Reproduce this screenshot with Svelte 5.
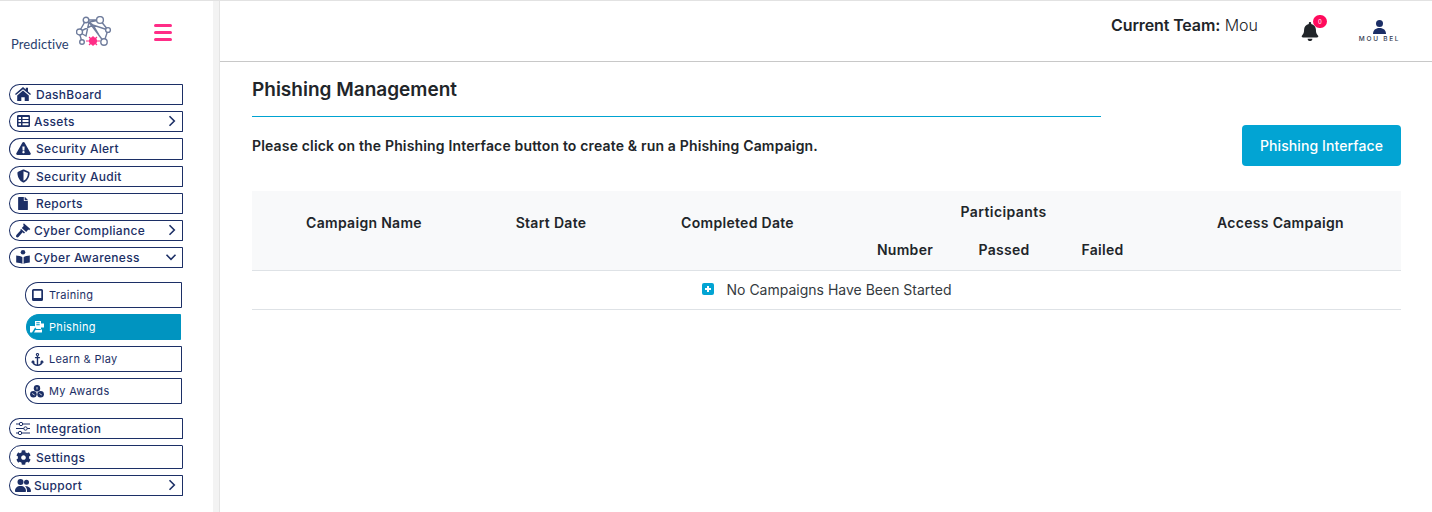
<script>
  const top = [
    { label: 'DashBoard', icon: 'home' },
    { label: 'Assets', icon: 'table', arrow: 'right' },
    { label: 'Security Alert', icon: 'alert', wide: true },
    { label: 'Security Audit', icon: 'shield' },
    { label: 'Reports', icon: 'file' },
    { label: 'Cyber Compliance', icon: 'gavel', arrow: 'right' },
    { label: 'Cyber Awareness', icon: 'book', arrow: 'down' }
  ];
  const sub = [
    { label: 'Training', icon: 'tablet' },
    { label: 'Phishing', icon: 'mail', active: true },
    { label: 'Learn & Play', icon: 'anchor' },
    { label: 'My Awards', icon: 'cubes' }
  ];
  const bottom = [
    { label: 'Integration', icon: 'sliders' },
    { label: 'Settings', icon: 'cog', tall: true },
    { label: 'Support', icon: 'users', arrow: 'right' }
  ];
</script>

{#snippet icon(name)}
  {#if name === 'home'}
    <svg class="ic" width="16" height="14" viewBox="0 0 16 14"><path d="M8 0L0 7l.9 1.100L8 2.200l7.100 5.900L16 7l-3-2.600V.7h-2.200v1.800zM2.200 8.500L8 3.500l5.800 5V14H9.700v-3.800H6.300V14H2.200z"/></svg>
  {:else if name === 'table'}
    <svg class="ic" width="13" height="12" viewBox="0 0 13 12"><path fill-rule="evenodd" d="M1.200 0h10.600A1.200 1.200 0 0 1 13 1.200v9.600a1.200 1.200 0 0 1-1.200 1.200H1.200A1.200 1.200 0 0 1 0 10.800V1.200A1.200 1.200 0 0 1 1.200 0zM1.500 2v2h2.500V2zm4 0v2h6V2zm-4 3.100v2h2.500v-2zm4 0v2h6v-2zm-4 3.100v2h2.500v-2zm4 0v2h6v-2z"/></svg>
  {:else if name === 'alert'}
    <svg class="ic" width="15" height="13" viewBox="0 0 576 512"><path d="M569.517 440.013C587.975 472.007 564.806 512 527.940 512H48.054c-36.937 0-59.999-40.055-41.577-71.987L246.423 23.985c18.467-32.009 64.720-31.951 83.154 0l239.940 416.028zM288 354c-25.405 0-46 20.595-46 46s20.595 46 46 46 46-20.595 46-46-20.595-46-46-46zm-43.673-165.346l7.418 136c.347 6.364 5.609 11.346 11.982 11.346h48.546c6.373 0 11.635-4.982 11.982-11.346l7.418-136c.375-6.874-5.098-12.654-11.982-12.654h-63.383c-6.884 0-12.356 5.780-11.981 12.654z"/></svg>
  {:else if name === 'shield'}
    <svg class="ic" width="13" height="14" viewBox="0 0 512 512"><path d="M466.500 83.700l-192-80a48.150 48.150 0 0 0-36.900 0l-192 80C27.700 91.100 16 108.600 16 128c0 198.500 114.500 335.700 221.500 380.300 11.800 4.900 25.100 4.900 36.900 0C360.100 472.600 496 349.300 496 128c0-19.400-11.700-36.900-29.500-44.300zM256.100 446.300l-.1-381 175.900 73.300c-3.300 151.400-82.100 261.100-175.800 307.700z"/></svg>
  {:else if name === 'file'}
    <svg class="ic" width="10" height="13" viewBox="0 0 384 512"><path d="M224 136V0H24C10.700 0 0 10.700 0 24v464c0 13.300 10.700 24 24 24h336c13.300 0 24-10.700 24-24V160H248c-13.200 0-24-10.800-24-24zm160-14.100v6.100H256V0h6.100c6.400 0 12.500 2.500 17 7l97.900 98c4.500 4.500 7 10.600 7 16.900z"/></svg>
  {:else if name === 'gavel'}
    <svg class="ic" width="15" height="15" viewBox="0 0 15 15"><path d="M7.800.2l6.500 5.800-1.200 1.300-.8-.7-2.100 2.300-4.400-3.900 2.100-2.300-.8-.7zM5.200 6l3.800 3.400-1 1.100-1.400-1.200-3.900 4.500c-.7.800-1.700.9-2.300.3s-.5-1.500.2-2.300l4.100-4.600-.5-.4z"/></svg>
  {:else if name === 'book'}
    <svg class="ic" width="14" height="14" viewBox="0 0 14 14"><circle cx="7" cy="2.300" r="2.300"/><path d="M.2 5.400C2.300 5.500 5.200 5.900 6.400 7.200V14C5 13 2.300 12.600.2 12.500zM13.800 5.400v7.100c-2.100.1-4.800.5-6.200 1.500V7.200c1.200-1.300 4.100-1.700 6.200-1.800z"/></svg>
  {:else if name === 'tablet'}
    <svg class="ic" width="11" height="12" viewBox="0 0 11 12"><path fill-rule="evenodd" d="M1.500 0h8A1.500 1.500 0 0 1 11 1.500v9A1.500 1.500 0 0 1 9.500 12h-8A1.500 1.500 0 0 1 0 10.500v-9A1.500 1.500 0 0 1 1.500 0zm.2 1.700v7.200h7.600V1.700z"/></svg>
  {:else if name === 'mail'}
    <svg class="ic" width="14" height="12" viewBox="0 0 14 12"><path fill-rule="evenodd" d="M5 0h6v2.500h3v4h-3V8H6.500L5 6.500zM6.300 1.300v1h3.400v-1zm0 2v1h3.400v-1zM0 5h4.500l1 1-1 1.500L3 10l-1 1.500H.5A.5.500 0 0 1 0 11zm10.500 3.500H12V11a.6.600 0 0 1-.6.600H4l1.500-2.500h5z"/></svg>
  {:else if name === 'anchor'}
    <svg class="ic" width="13" height="13" viewBox="0 0 576 576"><path d="M288 0a72 72 0 0 1 30 137.500V176h66a18 18 0 0 1 18 18v24a18 18 0 0 1-18 18h-66v270c60-8 108-40 128-88l-34-2c-10 0-15-12-8-20l72-72c5-5 13-5 18 0l72 72c7 8 2 20-8 20l-30 2C500 510 400 576 288 576S76 510 46 418l-30-2c-10 0-15-12-8-20l72-72c5-5 13-5 18 0l72 72c7 8 2 20-8 20l-34 2c20 48 68 80 128 88V236h-66a18 18 0 0 1-18-18v-24a18 18 0 0 1 18-18h66v-38.500A72 72 0 0 1 288 0zm0 48a24 24 0 1 0 0 48 24 24 0 0 0 0-48z"/></svg>
  {:else if name === 'cubes'}
    <svg class="ic" width="14" height="13" viewBox="0 0 14 13"><circle cx="7" cy="3.300" r="3.200"/><circle cx="3.400" cy="9.300" r="3.300"/><circle cx="10.600" cy="9.300" r="3.300"/><path d="M7 2v2.500M2.200 8.500l2.400 1.500M9.400 8.500l2.400 1.500" stroke="#fff" stroke-width=".8" fill="none"/></svg>
  {:else if name === 'sliders'}
    <svg class="ic" width="14" height="13" viewBox="0 0 14 13"><path d="M0 2h14M0 6.500h14M0 11h14" stroke="currentColor" stroke-width="1" fill="none"/><circle cx="5" cy="2" r="1.700" fill="#fff" stroke="currentColor"/><circle cx="9.500" cy="6.500" r="1.700" fill="#fff" stroke="currentColor"/><circle cx="4" cy="11" r="1.700" fill="#fff" stroke="currentColor"/></svg>
  {:else if name === 'cog'}
    <svg class="ic" width="15" height="15" viewBox="0 0 512 512"><path d="M487.400 315.700l-42.600-24.600c4.300-23.200 4.300-47 0-70.200l42.600-24.600c4.900-2.800 7.100-8.600 5.500-14-11.100-35.600-30-67.800-54.700-94.600-3.800-4.100-10-5.100-14.800-2.300L380.800 110c-17.900-15.400-38.500-27.300-60.800-35.100V25.800c0-5.600-3.900-10.500-9.400-11.700-36.700-8.200-74.300-7.800-109.200 0-5.500 1.200-9.400 6.100-9.400 11.700V75c-22.200 7.900-42.800 19.800-60.800 35.100L88.700 85.500c-4.900-2.800-11-1.900-14.800 2.300-24.700 26.700-43.600 58.900-54.700 94.600-1.700 5.400.6 11.200 5.500 14L67.300 221c-4.300 23.200-4.300 47 0 70.200l-42.600 24.600c-4.900 2.800-7.100 8.600-5.500 14 11.100 35.600 30 67.800 54.700 94.600 3.800 4.100 10 5.100 14.800 2.300l42.600-24.600c17.900 15.400 38.500 27.300 60.800 35.100v49.200c0 5.600 3.900 10.500 9.400 11.700 36.700 8.200 74.300 7.800 109.200 0 5.500-1.200 9.400-6.100 9.400-11.700v-49.200c22.200-7.900 42.800-19.800 60.800-35.100l42.600 24.600c4.900 2.800 11 1.900 14.800-2.300 24.700-26.700 43.600-58.900 54.700-94.600 1.500-5.500-.7-11.300-5.600-14.100zM256 336c-44.100 0-80-35.900-80-80s35.900-80 80-80 80 35.900 80 80-35.900 80-80 80z"/></svg>
  {:else if name === 'users'}
    <svg class="ic" width="16" height="13" viewBox="0 0 16 13"><circle cx="5.500" cy="3" r="3"/><circle cx="11.500" cy="3.300" r="2.500"/><path d="M0 12.200C0 9 2 7 5.500 7S11 9 11 12.200c0 .5-.3.800-.8.800H.8c-.5 0-.8-.3-.8-.8zM12 13h3.300c.4 0 .7-.3.700-.7C16 9.500 14.300 7.200 11 7.200c-.4 0-.8 0-1 .1 1.500 1.200 2.200 3 2 5.700z"/></svg>
  {/if}
{/snippet}

{#snippet chevron(dir)}
  <svg class="chev" class:down={dir === 'down'} width="12" height="12" viewBox="0 0 12 12">
    {#if dir === 'right'}
      <path d="M3.500 1.200L8.300 6l-4.800 4.800" />
    {:else}
      <path d="M1.500 3.800L6 8.300l4.500-4.500" />
    {/if}
  </svg>
{/snippet}

{#snippet item(it)}
  <div class="item" class:has-arrow={it.arrow} class:tall={it.tall} class:wide={it.wide}>
    <span class="icon-box">{@render icon(it.icon)}</span>
    <span class="label">{it.label}</span>
    {#if it.arrow}{@render chevron(it.arrow)}{/if}
  </div>
{/snippet}

<div class="page">
  <aside class="sidebar">
    <div class="brand">
      <div class="logo-text">
        <span class="wordmark">Predictive</span>
        <svg class="network" width="36" height="34" viewBox="0 0 36 34">
          <g fill="#fff" stroke="#6f7c9c" stroke-width="1.400">
            <path d="M3 16L10 4l14 0 8 10-4 12M3 16l7 4 3-14 11-2M3 16l14-7 15 5M10 4l7 5 6 10M13 6l15 20M6 26l-3-10" fill="none"/>
            <circle cx="10" cy="4" r="2.800"/>
            <circle cx="24" cy="4" r="3.400"/>
            <circle cx="3.500" cy="16" r="3"/>
            <circle cx="32" cy="14" r="2.400"/>
            <circle cx="6" cy="26" r="2.300"/>
            <circle cx="28" cy="26" r="3.200"/>
          </g>
          <g fill="#ff2d87" stroke="#ff2d87">
            <circle cx="17" cy="25" r="3.600"/>
            <path d="M10 25h14M17 20v10M13 21l8 8M21 21l-8 8" stroke-width="1.100" fill="none"/>
          </g>
        </svg>
      </div>
      <div class="burger"><i></i><i></i><i></i></div>
    </div>

    <nav class="nav">
      {#each top as it}{@render item(it)}{/each}
      <div class="subnav">
        {#each sub as it}
          <div class="subitem" class:active={it.active}>
            <span class="icon-box">{@render icon(it.icon)}</span>
            <span>{it.label}</span>
          </div>
        {/each}
      </div>
      {#each bottom as it}{@render item(it)}{/each}
    </nav>
  </aside>

  <div class="gutter"></div>

  <main class="main">
    <header class="topbar">
      <div class="team"><b>Current Team:</b> <span>Mou</span></div>
      <div class="bell">
        <svg width="18" height="19" viewBox="0 0 448 512"><path d="M224 512c35.320 0 63.970-28.650 63.970-64H160.030c0 35.350 28.650 64 63.970 64zm215.390-149.710c-19.320-20.760-55.470-51.990-55.470-154.290 0-77.700-54.480-139.900-127.940-155.160V32c0-17.670-14.320-32-31.980-32s-31.980 14.330-31.980 32v20.840C118.560 68.100 64.080 130.300 64.080 208c0 102.300-36.150 133.530-55.470 154.290-6 6.450-8.660 14.160-8.610 21.710.11 16.400 12.980 32 32.100 32h383.800c19.120 0 32-15.600 32.100-32 .05-7.550-2.610-15.270-8.610-21.710z"/></svg>
        <span class="badge">0</span>
      </div>
      <div class="user">
        <svg width="13" height="14" viewBox="0 0 13 14"><circle cx="6.500" cy="3.500" r="3.500"/><path d="M0 14c0-3.800 2.500-6 6.500-6s6.500 2.200 6.500 6z"/></svg>
        <span>MOU BEL</span>
      </div>
    </header>

    <section class="content">
      <h1>Phishing Management</h1>
      <div class="rule"></div>
      <div class="intro">
        <p>Please click on the Phishing Interface button to create &amp; run a Phishing Campaign.</p>
        <button>Phishing Interface</button>
      </div>

      <table>
        <colgroup>
          <col class="c1" /><col class="c2" /><col class="c3" /><col class="c4" /><col class="c5" /><col class="c6" /><col class="c7" />
        </colgroup>
        <thead>
          <tr class="r1">
            <th class="span" rowspan="2">Campaign Name</th>
            <th class="span" rowspan="2">Start Date</th>
            <th class="span" rowspan="2">Completed Date</th>
            <th class="group" colspan="3">Participants</th>
            <th class="span last" rowspan="2">Access Campaign</th>
          </tr>
          <tr class="r2">
            <th>Number</th>
            <th>Passed</th>
            <th>Failed</th>
          </tr>
        </thead>
        <tbody>
          <tr>
            <td colspan="7">
              <span class="empty"><span class="plus"></span>No Campaigns Have Been Started</span>
            </td>
          </tr>
        </tbody>
      </table>
    </section>
  </main>
</div>

<style>
  :global(body) { margin: 0; background: #fff; }
  .page {
    display: flex;
    width: 1432px;
    height: 512px;
    overflow: hidden;
    box-sizing: border-box;
    border-top: 1px solid #e2e2e2;
    font-family: Inter, "Liberation Sans", sans-serif;
    color: #212529;
  }
  .sidebar { width: 213px; flex: none; box-sizing: border-box; padding-left: 9px; }
  .gutter { width: 6px; flex: none; background: #f3f3f3; }
  .main { flex: 1; border-left: 1px solid #e4e4e4; min-width: 0; }

  .brand { height: 83px; display: flex; align-items: flex-start; box-sizing: border-box; }
  .logo-text { display: flex; align-items: flex-start; width: 136px; margin: 15px 0 0 2px; }
  .wordmark {
    font-family: Lato, sans-serif;
    font-size: 13px;
    color: #2b3f6e;
    margin-top: 20px;
    width: 56px;
    letter-spacing: .1px;
  }
  .network { margin-left: 9px; }
  .burger { display: flex; flex-direction: column; gap: 4px; margin: 23px 0 0 7px; width: 18px; }
  .burger i { display: block; height: 3px; background: #ff2d87; border-radius: 2px; }

  .nav { display: flex; flex-direction: column; gap: 6px; color: #1c2f66; }
  .item {
    width: 174px;
    height: 21px;
    box-sizing: border-box;
    display: flex;
    align-items: center;
    border: 1px solid #1c2f66;
    border-radius: 12px 1px 1px 12px;
    padding: 0 0 1px 3px;
    font-size: 12px;
    font-weight: 500;
    letter-spacing: .3px;
  }
  .item.tall { height: 24px; padding-bottom: 0; }
  .item.wide { height: 22px; }
  .icon-box { width: 20px; height: 100%; display: flex; align-items: center; justify-content: center; flex: none; margin-right: 3px; }
  .item.has-arrow .icon-box { margin-right: 1px; }
  .ic { fill: #1c2f66; color: #1c2f66; display: block; }
  .label { flex: 1; white-space: nowrap; }
  .chev { fill: none; stroke: #1c2f66; stroke-width: 1.600; margin-right: 4px; flex: none; }
  .chev.down { margin-right: 5px; }

  .subnav { display: flex; flex-direction: column; gap: 6px; margin: 8px 0 8px 16px; }
  .subitem {
    width: 157px;
    height: 26px;
    box-sizing: border-box;
    display: flex;
    align-items: center;
    border: 1px solid #1c2f66;
    border-radius: 14px 1px 1px 14px;
    padding-left: 2px;
    font-size: 11px;
    font-weight: 400;
    letter-spacing: .3px;
  }
  .subitem .icon-box { width: 18px; margin-right: 3px; }
  .subitem.active { background: #0094c0; border-color: #0094c0; color: #fff; width: 155px; margin-left: 1px; padding-left: 1px; }
  .subitem.active .ic { fill: #fff; }

  .topbar {
    height: 61px;
    box-sizing: border-box;
    border-bottom: 1px solid #c8c8c8;
    display: flex;
    align-items: flex-start;
    justify-content: flex-end;
  }
  .team { font-size: 16px; margin-top: 15px; line-height: 19px; margin-right: 43px; white-space: nowrap; color: #212529; }
  .team b { font-weight: 600; letter-spacing: -.12px; }
  .team span { font-weight: 300; }
  .bell { position: relative; margin: 21px 39px 0 0; width: 19px; }
  .bell svg { fill: #212529; display: block; }
  .badge {
    position: absolute;
    top: -7px;
    left: 12px;
    width: 14px;
    height: 13px;
    border-radius: 7px;
    background: #ff0a5c;
    color: #fff;
    font-size: 6px;
    line-height: 13px;
    text-align: center;
  }
  .user { width: 41px; margin: 19px 32px 0 0; display: flex; flex-direction: column; align-items: center; }
  .user svg { fill: #1c2f66; display: block; }
  .user span { font-size: 6.500px; letter-spacing: 1.750px; line-height: 10px; white-space: nowrap; color: #333b52; font-weight: 500; }

  .content { padding: 0 31px 0 32px; }
  h1 { margin: 16px 0 0; font-size: 19px; font-weight: 600; line-height: 24px; color: #212529; }
  .rule { width: 849px; height: 1px; background: #00a3d1; margin-top: 14px; }
  .intro { display: flex; justify-content: space-between; align-items: flex-start; margin-top: 8px; }
  .intro p { margin: 13px 0 0; font-size: 14px; line-height: 16px; font-weight: 600; letter-spacing: .16px; color: #212529; }
  button {
    width: 159px;
    height: 41px;
    border: 0;
    border-radius: 4px;
    background: #02a4d3;
    color: #fff;
    font: 500 14px Inter, sans-serif;
    letter-spacing: .1px;
  }
  table { width: 1149px; table-layout: fixed; border-collapse: collapse; margin-top: 25px; font-size: 14px; }
  .c1 { width: 224px; } .c2 { width: 150px; } .c3 { width: 223px; } .c4 { width: 112px; } .c5 { width: 86px; } .c6 { width: 111px; } .c7 { width: 243px; }
  thead { background: #f8f9fa; border-bottom: 1px solid #dee2e6; }
  th { font-weight: 600; padding: 0; text-align: center; vertical-align: middle; color: #212529; letter-spacing: .3px; }
  th.span { vertical-align: top; padding-top: 23px; }
  th.last { padding-left: 2px; }
  th.group { padding-bottom: 2px; letter-spacing: .4px; }
  .r1 { height: 42px; }
  .r2 { height: 37px; }
  .r2 th { padding-bottom: 4px; }
  td { height: 38px; padding: 0; text-align: center; border-bottom: 1px solid #dee2e6; color: #343a40; }
  .empty { display: inline-flex; align-items: center; gap: 13px; }
  .plus {
    width: 12px;
    height: 12px;
    border-radius: 2px;
    background: #02a4d3;
    position: relative;
    flex: none;
  }
  .plus::before { content: ""; position: absolute; left: 3px; top: 5px; width: 6px; height: 2px; background: #fff; }
  .plus::after { content: ""; position: absolute; left: 5px; top: 3px; width: 2px; height: 6px; background: #fff; }
</style>
